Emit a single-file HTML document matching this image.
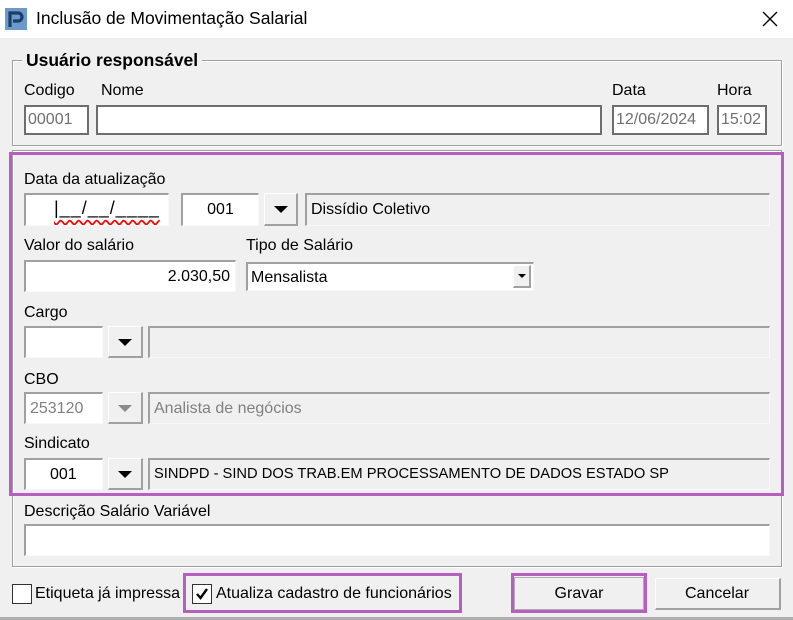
<!DOCTYPE html>
<html><head><meta charset="utf-8"><style>
*{box-sizing:border-box;margin:0;padding:0}
body{width:793px;height:620px;background:#f0f0f0;font-family:"Liberation Sans",sans-serif;font-size:16px;color:#000;position:relative;overflow:hidden}
.a{position:absolute}
.lbl{position:absolute;font-size:16px;line-height:18px;white-space:nowrap}
.in{position:absolute;background:#fff;border-top:2px solid #a0a0a0;border-left:2px solid #a0a0a0;border-bottom:1px solid #f8f8f8;border-right:1px solid #f8f8f8;line-height:28px;padding:0 4px;white-space:nowrap;overflow:hidden;font-size:16px}
.dis{background:#f0f0f0}
.ro{border:2px solid #6d6d6d;color:#707070;line-height:26px;padding:0 2px}
.btn{position:absolute;background:#f0f0f0;border-top:1px solid #fff;border-left:1px solid #fff;border-right:2px solid #a0a0a0;border-bottom:2px solid #a0a0a0}
.btn:after{content:"";position:absolute;left:50%;top:50%;margin-left:-7px;margin-top:-3px;border-left:7px solid transparent;border-right:7px solid transparent;border-top:7px solid #000}
.btn.g:after{border-top-color:#8a8a8a}
.sbtn{position:absolute;background:#f0f0f0;border-top:1px solid #fff;border-left:1px solid #fff;border-right:2px solid #a0a0a0;border-bottom:2px solid #a0a0a0}
.grp{position:absolute;border:1px solid #a0a0a0;box-shadow:1px 1px 0 #fff inset,1px 1px 0 #fff}
.pur{position:absolute;border:3px solid #b75fc0}
</style></head><body>
<div class="a" style="left:0;top:0;width:793px;height:38px;background:#fff"></div>
<div class="a" style="left:5px;top:8px;width:22px;height:22px;background:#6a9bcc"><svg width="22" height="22"><path d="M5 19V5h8a4 4 0 0 1 0 8H8" fill="none" stroke="#1d3e66" stroke-width="3.2"/></svg></div>
<div class="lbl" style="left:36px;top:8px;font-size:17.5px;line-height:20px">Inclusão de Movimentação Salarial</div>
<svg class="a" style="left:761px;top:10px" width="18" height="18"><path d="M2 2L16 16M16 2L2 16" stroke="#000" stroke-width="1.4"/></svg>

<div class="grp" style="left:12px;top:60px;width:770px;height:86px"></div>
<div class="lbl" style="left:22px;top:50px;padding:0 4px;background:#f0f0f0;font-weight:bold;font-size:17.5px;line-height:20px">Usuário responsável</div>
<div class="lbl" style="left:24px;top:82px">Codigo</div>
<div class="lbl" style="left:101px;top:82px">Nome</div>
<div class="lbl" style="left:612px;top:82px">Data</div>
<div class="lbl" style="left:717px;top:82px">Hora</div>
<div class="in ro" style="left:24px;top:105px;width:65px;height:30px">00001</div>
<div class="in ro" style="left:96px;top:105px;width:506px;height:30px"></div>
<div class="in ro" style="left:612px;top:105px;width:97px;height:30px">12/06/2024</div>
<div class="in ro" style="left:717px;top:105px;width:50px;height:30px">15:02</div>

<div class="grp" style="left:12px;top:150px;width:770px;height:417px"></div>
<div class="pur" style="left:9px;top:152px;width:775px;height:344px"></div>

<div class="lbl" style="left:24px;top:171px">Data da atualização</div>
<div class="in" style="left:24px;top:193px;width:145px;height:33px"><span class="a" style="left:28px;top:4px;font-size:18px;line-height:18px;text-decoration:underline wavy red;text-underline-offset:5px;letter-spacing:1px">|__/__/____</span></div>
<div class="in" style="left:181px;top:193px;width:78px;height:33px;text-align:center;line-height:30px">001</div>
<div class="btn" style="left:264px;top:193px;width:34px;height:33px"></div>
<div class="in dis" style="left:305px;top:193px;width:465px;height:33px;line-height:30px">Dissídio Coletivo</div>

<div class="lbl" style="left:24px;top:237px">Valor do salário</div>
<div class="lbl" style="left:246px;top:237px">Tipo de Salário</div>
<div class="in" style="left:24px;top:260px;width:212px;height:32px;text-align:right;line-height:29px;padding-right:5px">2.030,50</div>
<div class="in" style="left:246px;top:262px;width:288px;height:29px;line-height:27px;padding-left:3px">Mensalista</div>
<div class="sbtn" style="left:513px;top:265px;width:18px;height:23px"></div>
<div class="a" style="left:518px;top:274px;border-left:4px solid transparent;border-right:4px solid transparent;border-top:4px solid #000"></div>

<div class="lbl" style="left:24px;top:304px">Cargo</div>
<div class="in" style="left:24px;top:326px;width:79px;height:32px"></div>
<div class="btn" style="left:108px;top:326px;width:35px;height:32px"></div>
<div class="in dis" style="left:148px;top:326px;width:622px;height:32px"></div>

<div class="lbl" style="left:24px;top:371px">CBO</div>
<div class="in" style="left:24px;top:392px;width:79px;height:32px;color:#808080;line-height:29px">253120</div>
<div class="btn g" style="left:108px;top:392px;width:35px;height:32px"></div>
<div class="in dis" style="left:148px;top:392px;width:622px;height:32px;color:#808080;line-height:29px">Analista de negócios</div>

<div class="lbl" style="left:24px;top:435px">Sindicato</div>
<div class="in" style="left:24px;top:458px;width:79px;height:32px;line-height:29px;padding-left:24px">001</div>
<div class="btn" style="left:108px;top:458px;width:35px;height:32px"></div>
<div class="in dis" style="left:148px;top:458px;width:622px;height:32px;line-height:29px;font-size:14.7px">SINDPD - SIND DOS TRAB.EM PROCESSAMENTO DE DADOS ESTADO SP</div>

<div class="lbl" style="left:24px;top:503px">Descrição Salário Variável</div>
<div class="in" style="left:24px;top:524px;width:746px;height:32px"></div>

<div class="a" style="left:12px;top:584px;width:20px;height:20px;background:#fff;border:1px solid #333"></div>
<div class="lbl" style="left:35px;top:585px">Etiqueta já impressa</div>
<div class="pur" style="left:183px;top:573px;width:279px;height:40px"></div>
<div class="a" style="left:192px;top:584px;width:20px;height:20px;background:#fff;border:1px solid #333"><svg width="18" height="18"><path d="M4 9l3.5 4L14 4" fill="none" stroke="#000" stroke-width="2.4"/></svg></div>
<div class="lbl" style="left:216px;top:585px">Atualiza cadastro de funcionários</div>
<div class="a" style="left:514px;top:577px;width:130px;height:33px;background:#f0f0f0;border:1px solid #adadad"></div>
<div class="pur" style="left:511px;top:573px;width:136px;height:40px"></div>
<div class="lbl" style="left:511px;top:585px;width:136px;text-align:center">Gravar</div>
<div class="a" style="left:655px;top:578px;width:126px;height:32px;background:#f0f0f0;border-top:1px solid #fff;border-left:1px solid #fff;border-right:2px solid #a0a0a0;border-bottom:2px solid #a0a0a0"></div>
<div class="lbl" style="left:655px;top:585px;width:124px;text-align:center">Cancelar</div>
<div class="a" style="left:0;top:617px;width:793px;height:3px;background:#b0b0b0"></div>
</body></html>
